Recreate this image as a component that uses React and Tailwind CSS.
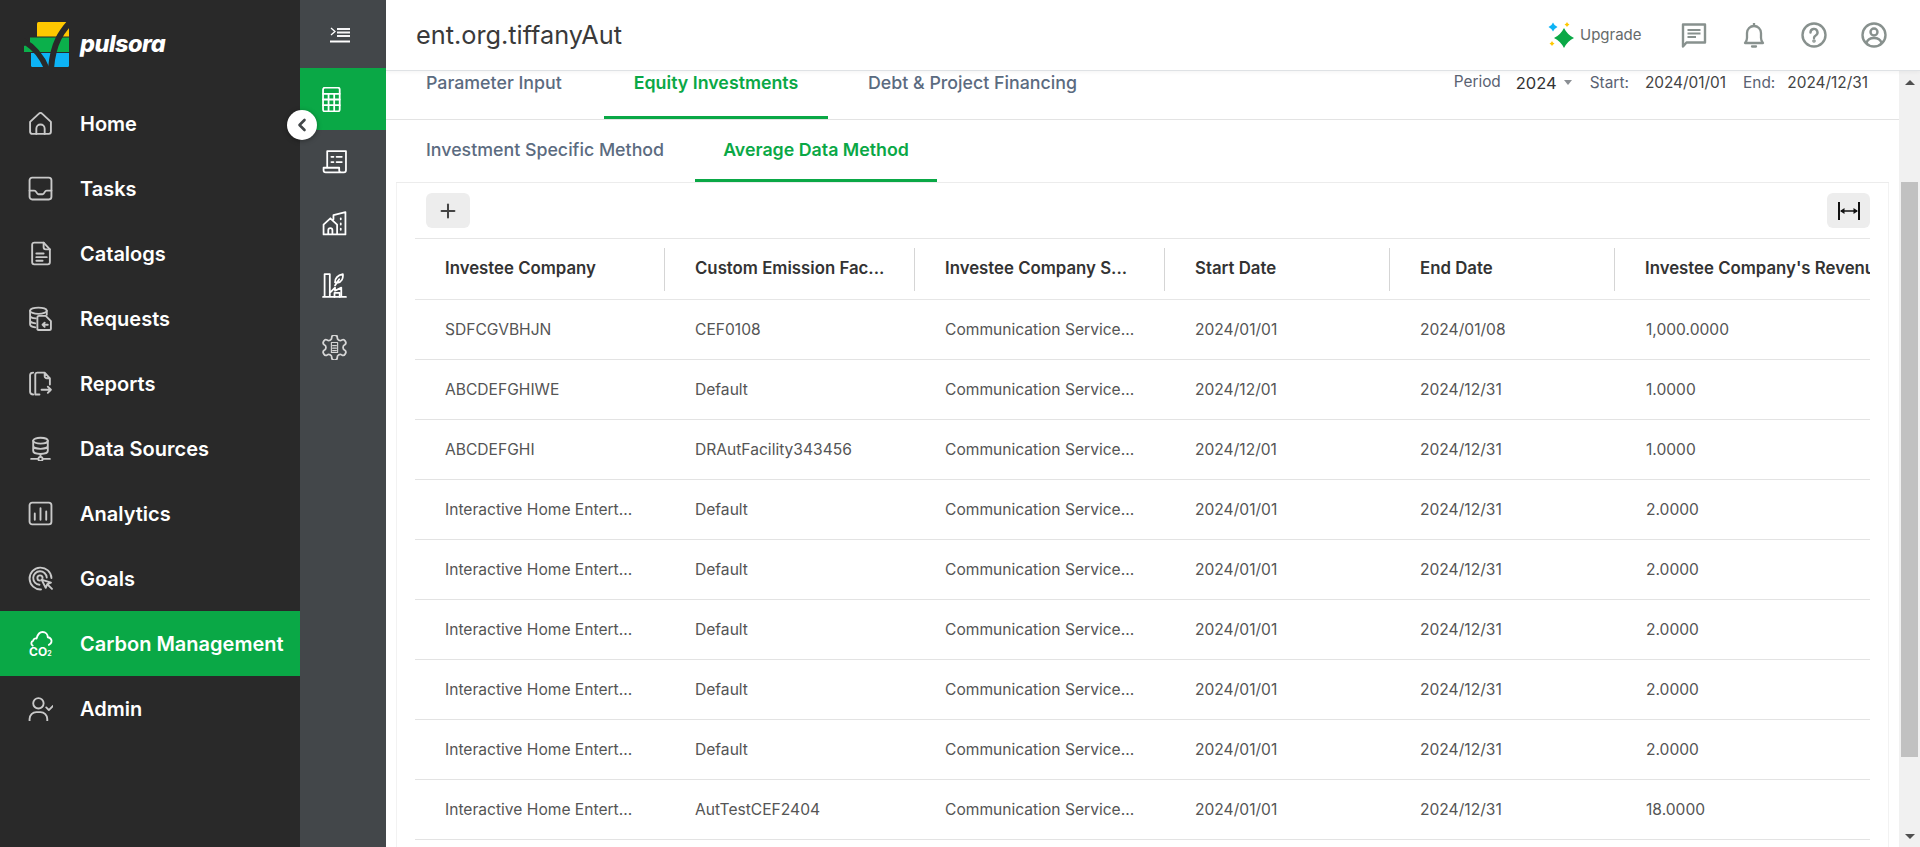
import { Plus } from "lucide-react";

const GREEN = "#0aa846";

const rows = [
  ["SDFCGVBHJN", "CEF0108", "2024/01/01", "2024/01/08", "1,000.0000"],
  ["ABCDEFGHIWE", "Default", "2024/12/01", "2024/12/31", "1.0000"],
  ["ABCDEFGHI", "DRAutFacility343456", "2024/12/01", "2024/12/31", "1.0000"],
  ["Interactive Home Entert...", "Default", "2024/01/01", "2024/12/31", "2.0000"],
  ["Interactive Home Entert...", "Default", "2024/01/01", "2024/12/31", "2.0000"],
  ["Interactive Home Entert...", "Default", "2024/01/01", "2024/12/31", "2.0000"],
  ["Interactive Home Entert...", "Default", "2024/01/01", "2024/12/31", "2.0000"],
  ["Interactive Home Entert...", "Default", "2024/01/01", "2024/12/31", "2.0000"],
  ["Interactive Home Entert...", "AutTestCEF2404", "2024/01/01", "2024/12/31", "18.0000"],
];

function Ico({ size = 26, sw = 1.8, children, className = "" }) {
  return (
    <svg
      width={size}
      height={size}
      viewBox="0 0 24 24"
      fill="none"
      stroke="currentColor"
      strokeWidth={sw}
      strokeLinecap="round"
      strokeLinejoin="round"
      className={className}
    >
      {children}
    </svg>
  );
}

const navItems = [
  {
    label: "Home",
    icon: (
      <>
        <path d="M2 10.500 10.500 2.500a2 2 0 0 1 3 0L22 10.500V20a2 2 0 0 1-2 2H4a2 2 0 0 1-2-2z" />
        <path d="M8 22v-5a4 4 0 0 1 8 0v5" />
      </>
    ),
  },
  {
    label: "Tasks",
    icon: (
      <>
        <rect x="1.500" y="1.500" width="21" height="21" rx="2.500" />
        <path d="M1.500 14H6c1 0 1.500.6 2 1.500s1 2 2 2h4c1 0 1.500-1 2-2S17 14 18 14h4.500" />
      </>
    ),
  },
  {
    label: "Catalogs",
    icon: (
      <>
        <path d="M15 1.500H6a2 2 0 0 0-2 2v17a2 2 0 0 0 2 2h13a2 2 0 0 0 2-2V8z" />
        <path d="M15 1.500V6a2 2 0 0 0 2 2h4M8 12h7M8 15.500h10M8 19h6" />
      </>
    ),
  },
  {
    label: "Requests",
    icon: (
      <>
        <ellipse cx="10" cy="4.500" rx="8" ry="3" />
        <path d="M2 4.500v13c0 1.500 2 2.600 5 3M2 9c0 1.300 2.600 2.600 5.500 2.900M2 14c0 1.200 2 2.300 5 2.700M18 4.500v4" />
        <path d="M9 11a1.500 1.500 0 0 1 1.500-1.500H17l5 5v7a1.500 1.500 0 0 1-1.500 1.500h-10A1.500 1.500 0 0 1 9 22.500zM19 18h-5m2-2-2 2 2 2" />
      </>
    ),
  },
  {
    label: "Reports",
    icon: (
      <>
        <path d="M5 22.500c-2 0-3-1-3-2.500V4c0-1.500 1-2.500 3-2.500" />
        <path d="M7 22.500V3.500a2 2 0 0 1 2-2h7l5 5.500V13M16 1.500V5a2 2 0 0 0 2 2h3M7 22.500h4M13 18h9m-3-3 3 3-3 3" />
      </>
    ),
  },
  {
    label: "Data Sources",
    icon: (
      <>
        <ellipse cx="12" cy="4.500" rx="7" ry="2.800" />
        <path d="M5 4.500v10c0 1.500 3 2.800 7 2.800s7-1.300 7-2.800v-10M5 9.500c0 1.500 3 2.800 7 2.800s7-1.300 7-2.800" />
        <path d="M12 17.500V20M3 22h6.500M14.500 22H21" />
        <circle cx="12" cy="22" r="2" />
      </>
    ),
  },
  {
    label: "Analytics",
    icon: (
      <>
        <rect x="1.500" y="1.500" width="21" height="21" rx="2.500" />
        <path d="M6.500 12v6M12 7v11M17.500 10v8" />
      </>
    ),
  },
  {
    label: "Goals",
    icon: (
      <>
        <path d="M12.500 22.500A10.500 10.500 0 1 1 22.500 11.500" />
        <path d="M11 18a6.500 6.500 0 1 1 7-7" />
        <path d="M11.500 14a2.500 2.500 0 1 1 2.500-2.500" />
        <path d="M13 13l9 3-3.500 1.500-1.500 3.500zM18.500 17.500 23 22" />
      </>
    ),
  },
  {
    label: "Carbon Management",
    active: true,
    icon: (
      <path d="M4.500 14c-1.800-.8-1.800-3.800.5-4.800.3-1.700 1.800-2.500 3.200-2C9.200 3.500 11.200 1 14 1c3 0 5 2.200 5 5 2.500.3 4 2.200 3.500 4.500-.3 1.300-1 2.200-2.500 2.800" />
    ),
    co2: true,
  },
  {
    label: "Admin",
    icon: (
      <>
        <circle cx="10" cy="7" r="5" />
        <path d="M1.500 24v-2A6.500 6.500 0 0 1 8 15.500h4a6.500 6.500 0 0 1 6.500 6.500v2M17.500 11l2.500 2.500 4-4" />
      </>
    ),
  },
];

// three colour bars, the dark Y is stroked over them
function PulsoraLogo() {
  return (
    <svg width="46" height="46" viewBox="0 0 46 46">
      <path d="M13 1.500A1.500 1.500 0 0 1 14.500 0H45v14.500H13z" fill="#ffc800" />
      <path d="M6 15.500h39V30H6z" fill="#0bb04b" />
      <path d="M0 24l7-3v9H0z" fill="#0bb04b" />
      <path d="M7 31h38v12.500a1.500 1.500 0 0 1-1.500 1.500h-35A1.500 1.500 0 0 1 7 43.500z" fill="#0db3f5" />
      <path d="M48 -2C38 9 29 20 27 47" fill="none" stroke="#292929" strokeWidth="6" />
      <path d="M-2 18C9 24 17 32 23 47" fill="none" stroke="#292929" strokeWidth="5.500" />
    </svg>
  );
}

function Sidebar() {
  return (
    <aside className="w-[300px] shrink-0 bg-[#292929] flex flex-col">
      <div className="h-[91px] flex items-center pl-6 pb-[2px] gap-[10px]">
        <PulsoraLogo />
        <span className="text-[23.500px] leading-none font-extrabold italic text-white tracking-[-0.5px] mb-[2px]">
          pulsora
        </span>
      </div>
      {navItems.map((item) => (
        <div
          key={item.label}
          className={`h-[65px] flex items-center pl-[28px] ${item.active ? "bg-[#0aa846] text-white" : "text-[#c9c9c9]"}`}
        >
          <div className="relative w-[26px] h-[26px]">
            <Ico size={25} sw={1.8}>
              {item.icon}
            </Ico>
            {item.co2 && (
              <span className="absolute left-[1px] top-[15px] text-[12px] leading-none font-bold text-white whitespace-nowrap">
                CO<span className="text-[7px]">2</span>
              </span>
            )}
          </div>
          <span className="ml-[26px] text-[20px] font-semibold text-white whitespace-nowrap">
            {item.label}
          </span>
        </div>
      ))}
    </aside>
  );
}

function SecondaryBar() {
  const icons = [
    <>
      <rect x="1" y="0.500" width="16" height="23" rx="2" />
      <path d="M1 6.500h16M1 12h16M1 17.500h16M6.300 6.500V23.500M11.700 6.500V23.500" />
    </>,
    <>
      <path d="M5 18V2h18v18.500a2 2 0 0 1-2 2H3.500a2 2 0 0 1-2-2V18h15v2.500a2 2 0 0 0 2 2" />
      <path d="M9 7.500h2M14 7.500h5M9 12.500h2M14 12.500h5" />
    </>,
    <>
      <path d="M1.500 22.500V13L8 7l6.500 6v9.500zM6 22.500v-4a2 2 0 0 1 4 0v4M11 8V4l11.500-3v21.500H14.500M18 7v1M18 12v1M18 17v1" />
    </>,
    <>
      <path d="M1 23h22M2.500 23V1h5v22M7.500 19l5-5v3l6-3v9" />
      <path d="M12 23v-4h5v4M12.500 9c0-4 3-7 7.500-8 .5 4-1 8-5.500 8.500zM12.500 12l4-6" />
    </>,
    <g transform="translate(-2.400 -2.400) scale(1.200)" stroke="#d6d6d6" strokeWidth="1.400">
      <path d="M12.220 2h-.44a2 2 0 0 0-2 2v.18a2 2 0 0 1-1 1.730l-.43.250a2 2 0 0 1-2 0l-.15-.08a2 2 0 0 0-2.730.730l-.22.380a2 2 0 0 0 .73 2.730l.15.1a2 2 0 0 1 1 1.720v.51a2 2 0 0 1-1 1.740l-.15.09a2 2 0 0 0-.73 2.730l.22.380a2 2 0 0 0 2.730.730l.15-.08a2 2 0 0 1 2 0l.43.250a2 2 0 0 1 1 1.730V20a2 2 0 0 0 2 2h.44a2 2 0 0 0 2-2v-.18a2 2 0 0 1 1-1.730l.43-.25a2 2 0 0 1 2 0l.15.08a2 2 0 0 0 2.730-.73l.22-.39a2 2 0 0 0-.73-2.730l-.15-.08a2 2 0 0 1-1-1.740v-.5a2 2 0 0 1 1-1.740l.15-.09a2 2 0 0 0 .73-2.730l-.22-.38a2 2 0 0 0-2.730-.73l-.15.08a2 2 0 0 1-2 0l-.43-.25a2 2 0 0 1-1-1.730V4a2 2 0 0 0-2-2z" />
      <path d="M9.500 8h5v8h-5zM10.500 10.500h3M10.500 12.500h3M10.500 14.500h3" strokeWidth="0.900" />
    </g>,
  ];
  return (
    <div className="w-[86px] shrink-0 bg-[#43474a] flex flex-col text-white">
      <div className="h-[68px] flex items-start pt-[27px] pl-[30px]">
        <svg width="20" height="16" viewBox="0 0 20 16" fill="none" stroke="currentColor">
          <path d="M1 1l4 3.500L1 8" strokeWidth="1.300" />
          <path d="M7 2h13M7 5.500h13M7 9h13" strokeWidth="1.800" strokeOpacity="0.95" />
          <path d="M0 14.500h20" strokeWidth="2" />
        </svg>
      </div>
      {icons.map((icon, i) => (
        <div
          key={i}
          className={`h-[62px] flex items-center pl-[22px] ${i === 0 ? "bg-[#0aa846]" : ""}`}
        >
          <Ico size={25} sw={1.7}>
            {icon}
          </Ico>
        </div>
      ))}
    </div>
  );
}

function Header() {
  return (
    <header className="relative z-10 h-[71px] shrink-0 bg-white border-b border-[#dfe2e5] shadow-[0_1px_4px_rgba(0,0,0,0.05)] flex items-center pl-[30px] pr-[33px]">
      <h1 className="text-[25.300px] font-normal text-[#3a3a3a]">ent.org.tiffanyAut</h1>
      <div className="ml-auto flex items-center text-[#88918e]">
        <svg width="27" height="27" viewBox="0 0 27 27">
          <path d="M16 6Q19.500 13 26 16Q19.500 19 16 26Q12.500 19 6 16Q12.500 13 16 6z" fill={GREEN} />
          <path d="M5 0.500Q6 3.500 9.500 5Q6 6.500 5 9.500Q4 6.500 0.500 5Q4 3.500 5 0.500z" fill="#0db3f5" />
          <path d="M19 0Q19.500 1.500 21.500 2.500Q19.500 3.500 19 5Q18.500 3.500 16.500 2.500Q18.500 1.500 19 0z" fill="#ffc800" />
          <path d="M4 19Q4.500 20.500 6.500 21.500Q4.500 22.500 4 24Q3.500 22.500 1.500 21.500Q3.500 20.500 4 19z" fill="#ffc800" />
        </svg>
        <span className="ml-[5px] text-[15px] text-[#666b6a] w-[61px]">Upgrade</span>
        <svg className="ml-[40px]" width="26" height="26" viewBox="0 0 26 26" fill="none" stroke="currentColor" strokeWidth="2.400">
          <path d="M2 2.500h22v18H5.500L2 24.500z" strokeLinejoin="round" />
          <path d="M6.500 8h13M6.500 11.500h13M6.500 15h8.500" strokeWidth="2" />
        </svg>
        <svg className="ml-[35px]" width="24" height="26" viewBox="0 0 24 26" fill="none" stroke="currentColor" strokeWidth="2.300">
          <path d="M3 21c1.500-1.500 2-3 2-5v-5a7 7 0 0 1 14 0v5c0 2 .5 3.500 2 5z" strokeLinejoin="round" />
          <path d="M12 1v3" />
          <path d="M10 24.500h4" strokeLinecap="round" />
        </svg>
        <svg className="ml-[35px]" width="26" height="26" viewBox="0 0 26 26" fill="none" stroke="currentColor" strokeWidth="2.400">
          <circle cx="13" cy="13" r="11.500" />
          <path d="M9.500 10.500a3.500 3.500 0 1 1 5.200 3c-1.200.7-1.700 1.300-1.700 2.500" strokeLinecap="round" />
          <circle cx="13" cy="19" r="0.600" fill="currentColor" />
        </svg>
        <svg className="ml-[34px]" width="26" height="26" viewBox="0 0 26 26" fill="none" stroke="currentColor" strokeWidth="2.400">
          <circle cx="13" cy="13" r="11.500" />
          <circle cx="13" cy="10" r="3.500" />
          <path d="M5.500 21c1-3.500 4-5 7.500-5s6.500 1.500 7.500 5" />
        </svg>
      </div>
    </header>
  );
}

function Tabs() {
  return (
    <div className="h-[49px] shrink-0 border-b border-[#e3e3e3] flex items-start">
      <div className="pl-[40px] w-[218px] pt-[1px] text-[17.800px] leading-[22px] font-medium text-[#5b6b80] whitespace-nowrap">
        Parameter Input
      </div>
      <div className="h-[48px] w-[224px] text-center border-b-[3px] border-[#0aa846] pt-[1px] text-[17.800px] leading-[22px] font-semibold text-[#0aa846] whitespace-nowrap">
        Equity Investments
      </div>
      <div className="pl-[40px] pt-[1px] text-[17.800px] leading-[22px] font-medium text-[#5b6b80] whitespace-nowrap">
        Debt &amp; Project Financing
      </div>
      <div className="ml-auto pr-[31px] flex items-start text-[15.400px] leading-[22px] text-[#5a6272] whitespace-nowrap">
        <span>Period</span>
        <span className="ml-[15px] text-[16.500px] text-[#333] leading-[24px]">2024</span>
        <span className="ml-[7px] mt-[9px] w-0 h-0 border-x-[4px] border-x-transparent border-t-[5px] border-t-[#8b8f94]" />
        <span className="ml-[18px] mt-[1px]">Start:</span>
        <span className="ml-[16px] mt-[1px] text-[#444]">2024/01/01</span>
        <span className="ml-[17px] mt-[1px]">End:</span>
        <span className="ml-[12px] mt-[1px] text-[#444]">2024/12/31</span>
      </div>
    </div>
  );
}

function SubTabs() {
  return (
    <div className="h-[63px] shrink-0 mx-[10px] flex items-start border-b border-[#ececec]">
      <div className="pl-[30px] w-[299px] pt-[19px] text-[17.800px] leading-[22px] font-medium text-[#5b6b80] whitespace-nowrap">
        Investment Specific Method
      </div>
      <div className="w-[242px] h-[62px] pt-[19px] text-center border-b-[3px] border-[#0aa846] text-[17.800px] leading-[22px] font-semibold text-[#0aa846] whitespace-nowrap">
        Average Data Method
      </div>
    </div>
  );
}

const columns = [
  { title: "Investee Company", w: "w-[250px]" },
  { title: "Custom Emission Fac...", w: "w-[250px]" },
  { title: "Investee Company S...", w: "w-[250px]" },
  { title: "Start Date", w: "w-[225px]" },
  { title: "End Date", w: "w-[225px]" },
  { title: "Investee Company's Revenue", w: "flex-1 min-w-0" },
];

function DataTable() {
  return (
    <div className="mx-[18px] overflow-hidden">
      <div className="h-[62px] flex items-center border-y border-[#e6e6e6]">
        {columns.map((col, i) => (
          <div
            key={col.title}
            className={`${col.w} h-[43px] flex items-center pl-[30px] text-[16.800px] font-semibold text-[#333] whitespace-nowrap overflow-hidden ${i < 5 ? "border-r border-[#d5d5d5]" : ""}`}
          >
            {col.title}
          </div>
        ))}
      </div>
      {rows.map((row, i) => (
        <div key={i} className="h-[60px] flex items-center border-b border-[#e3e3e3] text-[15.600px] text-[#555] whitespace-nowrap">
          <div className="w-[250px] pl-[30px]">{row[0]}</div>
          <div className="w-[250px] pl-[30px]">{row[1]}</div>
          <div className="w-[250px] pl-[30px]">Communication Service...</div>
          <div className="w-[225px] pl-[30px]">{row[2]}</div>
          <div className="w-[225px] pl-[30px]">{row[3]}</div>
          <div className="flex-1 pl-[31px]">{row[4]}</div>
        </div>
      ))}
    </div>
  );
}

function Toolbar() {
  return (
    <div className="h-[55px] flex items-start pt-[10px] pl-[29px] pr-[18px] justify-between">
      <button className="w-[44px] h-[35px] rounded-[6px] bg-[#ededed] flex items-center justify-center text-[#444]">
        <Plus size={22} strokeWidth={2.200} />
      </button>
      <button className="w-[43px] h-[35px] rounded-[6px] bg-[#ededed] flex items-center justify-center text-[#111]">
        <svg width="22" height="18" viewBox="0 0 22 18" fill="none" stroke="currentColor">
          <path d="M1 0v18M21 0v18" strokeWidth="2" />
          <path d="M3 9h16" strokeWidth="1.500" />
          <path d="M2 9l4.500-3v6zM20 9l-4.500-3v6z" fill="currentColor" strokeWidth="0" />
        </svg>
      </button>
    </div>
  );
}

function Scrollbar() {
  return (
    <div className="w-[21px] shrink-0 bg-[#f1f1f1] flex flex-col items-center pt-[9px] pb-[8px]">
      <span className="w-0 h-0 border-x-[5px] border-x-transparent border-b-[5px] border-b-[#505050]" />
      <div className="mt-[97px] w-[17px] h-[575px] bg-[#c1c1c1]" />
      <span className="mt-auto w-0 h-0 border-x-[5px] border-x-transparent border-t-[5px] border-t-[#505050]" />
    </div>
  );
}

export default function App() {
  return (
    <div className="relative h-[847px] w-full overflow-hidden flex bg-white font-['Inter',sans-serif]">
      <Sidebar />
      <SecondaryBar />
      <div className="flex-1 min-w-0 flex flex-col">
        <Header />
        <div className="flex-1 min-h-0 flex">
          <div className="flex-1 min-w-0 flex flex-col">
            <Tabs />
            <SubTabs />
            <div className="flex-1 min-h-0 mx-[10px] border-x border-[#f2f2f2]">
              <Toolbar />
              <DataTable />
            </div>
          </div>
          <Scrollbar />
        </div>
      </div>
      {/* collapse button sits over both sidebars */}
      <button className="absolute left-[287px] top-[110px] w-[30px] h-[30px] rounded-full bg-white shadow-[0_1px_5px_rgba(0,0,0,0.35)] flex items-center justify-center">
        <svg width="12" height="14" viewBox="0 0 12 14" fill="none" stroke="#43474a" strokeWidth="2.600" strokeLinecap="round" strokeLinejoin="round">
          <path d="M8.500 2 3.500 7l5 5" />
        </svg>
      </button>
    </div>
  );
}
